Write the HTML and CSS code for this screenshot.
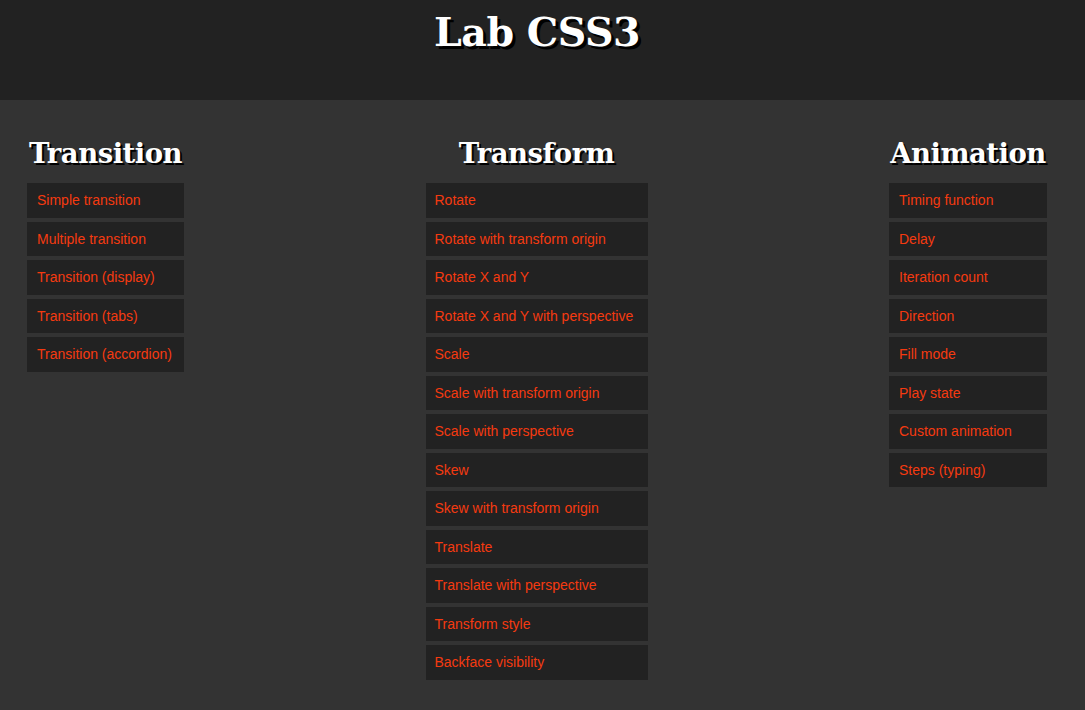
FILE: index.html
```html
<!DOCTYPE html>
<html>
<head>
<meta charset="utf-8">
<title>Lab CSS3</title>
<link rel="stylesheet" href="styles.css">
</head>
<body>
<header class="top">
  <h1 class="title">Lab CSS3</h1>
</header>
<main class="columns">
  <section class="col col-transition">
    <h2 class="col-title">Transition</h2>
    <ul class="links">
      <li><a href="#">Simple transition</a></li>
      <li><a href="#">Multiple transition</a></li>
      <li><a href="#">Transition (display)</a></li>
      <li><a href="#">Transition (tabs)</a></li>
      <li><a href="#">Transition (accordion)</a></li>
    </ul>
  </section>
  <section class="col col-transform">
    <h2 class="col-title">Transform</h2>
    <ul class="links">
      <li><a href="#">Rotate</a></li>
      <li><a href="#">Rotate with transform origin</a></li>
      <li><a href="#">Rotate X and Y</a></li>
      <li><a href="#">Rotate X and Y with perspective</a></li>
      <li><a href="#">Scale</a></li>
      <li><a href="#">Scale with transform origin</a></li>
      <li><a href="#">Scale with perspective</a></li>
      <li><a href="#">Skew</a></li>
      <li><a href="#">Skew with transform origin</a></li>
      <li><a href="#">Translate</a></li>
      <li><a href="#">Translate with perspective</a></li>
      <li><a href="#">Transform style</a></li>
      <li><a href="#">Backface visibility</a></li>
    </ul>
  </section>
  <section class="col col-animation">
    <h2 class="col-title">Animation</h2>
    <ul class="links">
      <li><a href="#">Timing function</a></li>
      <li><a href="#">Delay</a></li>
      <li><a href="#">Iteration count</a></li>
      <li><a href="#">Direction</a></li>
      <li><a href="#">Fill mode</a></li>
      <li><a href="#">Play state</a></li>
      <li><a href="#">Custom animation</a></li>
      <li><a href="#">Steps (typing)</a></li>
    </ul>
  </section>
</main>
</body>
</html>
```

FILE: styles.css
```css
html, body {
  margin: 0;
  padding: 0;
}
body {
  background: #333333;
  font-family: "Liberation Sans", Arial, sans-serif;
  min-height: 710px;
}
.top {
  background: #222222;
  height: 100px;
  box-sizing: border-box;
  padding: 6px 38px 0 27px;
}
.title {
  margin: 0;
  text-align: center;
  color: #ffffff;
  font-family: "DejaVu Serif", Georgia, serif;
  font-weight: bold;
  font-size: 39.5px;
  line-height: 52px;
  letter-spacing: -0.5px;
  text-shadow: 3px 3px 0 #000000;
}
.columns {
  display: flex;
  justify-content: space-between;
  align-items: flex-start;
  padding: 33px 38px 0 27px;
}
.col {
  flex: none;
}
.col-transition { width: 157px; }
.col-transform { width: 222px; }
.col-animation { width: 158px; }
.col-title {
  margin: 0 0 10px;
  text-align: center;
  color: #ffffff;
  font-family: "DejaVu Serif", Georgia, serif;
  font-weight: bold;
  font-size: 27.5px;
  line-height: 40px;
  letter-spacing: -0.5px;
  white-space: nowrap;
  text-shadow: 2px 2px 0 #000000;
}
.links {
  list-style: none;
  margin: 0;
  padding: 0;
  display: flex;
  flex-direction: column;
  gap: 4px;
}
.links a {
  display: block;
  background: #222222;
  color: #f53a10;
  text-decoration: none;
  font-size: 14px;
  line-height: 16.5px;
  padding: 9px 10px 9px 9px;
  white-space: nowrap;
}
.col-transition .links a,
.col-animation .links a {
  padding-left: 10px;
}
```
